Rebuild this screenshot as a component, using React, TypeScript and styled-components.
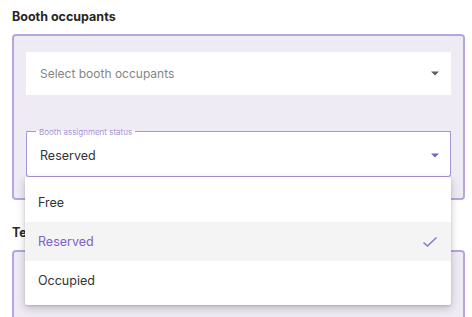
import styled, { createGlobalStyle } from "styled-components";

const GlobalStyle = createGlobalStyle`
  body {
    margin: 0;
    background: #ffffff;
    font-family: Inter, "Open Sans", Arial, sans-serif;
    color: #333333;
  }
`;

const statusOptions = ["Free", "Reserved", "Occupied"];
const selected = "Reserved";

const Caret = ({ color }: { color: string }) => (
  <svg width="8" height="5" viewBox="0 0 8 5">
    <path d="M0 0.5 L8 0.5 L4 4.5 Z" fill={color} />
  </svg>
);

const Check = () => (
  <svg width="16" height="12" viewBox="0 0 16 12">
    <path d="M1.5 6.5 L5.5 10 L14.5 1.5" fill="none" stroke="#8c73c9" strokeWidth="1.4" />
  </svg>
);

export default function App() {
  return (
    <>
      <GlobalStyle />
      <Page>
        <Section>
          <Heading>Booth occupants</Heading>
          <Panel>
            <FilledSelect>
              <Placeholder>Select booth occupants</Placeholder>
              <Caret color="#5f5f5f" />
            </FilledSelect>
            <FieldWrap>
              <OutlinedSelect>
                <Legend>
                  <span>Booth assignment status</span>
                </Legend>
                <Value>{selected}</Value>
                <Caret color="#7b5ec4" />
              </OutlinedSelect>
              <Menu>
                {statusOptions.map((opt) => (
                  <MenuItem key={opt} $active={opt === selected}>
                    {opt}
                    {opt === selected && <Check />}
                  </MenuItem>
                ))}
              </Menu>
            </FieldWrap>
          </Panel>
        </Section>
        <Section>
          <Heading>Team members</Heading>
          <Panel $tall />
        </Section>
      </Page>
    </>
  );
}

const Page = styled.div`
  display: flex;
  flex-direction: column;
  gap: 25px;
  padding: 9px 7px 0 12px;
  height: 317px;
  box-sizing: border-box;
  overflow: hidden;
`;

const Section = styled.section`
  display: flex;
  flex-direction: column;
  gap: 9px;
`;

const Heading = styled.h2`
  margin: 0;
  font-size: 12.5px;
  line-height: 16px;
  font-weight: 700;
  color: #262626;
`;

const Panel = styled.div<{ $tall?: boolean }>`
  display: flex;
  flex-direction: column;
  gap: 36px;
  padding: 16px 12px 21px;
  min-height: ${(p) => (p.$tall ? "120px" : "auto")};
  border: 2px solid #b7a6dc;
  border-radius: 4px;
  background: #efebf4;
`;

const FilledSelect = styled.div`
  display: flex;
  align-items: center;
  justify-content: space-between;
  height: 43px;
  padding: 0 12px 0 14px;
  background: #ffffff;
`;

const Placeholder = styled.span`
  font-size: 12px;
  color: #858585;
`;

const FieldWrap = styled.div`
  position: relative;
`;

const OutlinedSelect = styled.div`
  position: relative;
  display: flex;
  align-items: center;
  justify-content: space-between;
  height: 46px;
  box-sizing: border-box;
  padding: 4px 11px 0 13px;
  border: 1px solid #a893d3;
  border-top: none;
  border-radius: 3px;
  background: #ffffff;
`;

const Legend = styled.div`
  position: absolute;
  top: 0;
  left: -1px;
  right: -1px;
  display: flex;
  align-items: center;
  height: 1px;
  &::before {
    content: "";
    width: 10px;
    height: 1px;
    background: #a893d3;
    border-top-left-radius: 3px;
  }
  &::after {
    content: "";
    flex: 1;
    height: 1px;
    background: #a893d3;
  }
  span {
    padding: 0 3px;
    font-size: 8px;
    line-height: 10px;
    color: #a491d4;
    white-space: nowrap;
  }
`;

const Value = styled.span`
  font-size: 12.5px;
  color: #333333;
`;

const Menu = styled.ul`
  position: absolute;
  top: 100%;
  left: -1px;
  right: 0;
  z-index: 5;
  margin: 0;
  padding: 6px 0 5px;
  list-style: none;
  background: #ffffff;
  border-radius: 2px;
  box-shadow: 0 3px 8px rgba(0, 0, 0, 0.22), 0 1px 2px rgba(0, 0, 0, 0.12);
`;

const MenuItem = styled.li<{ $active?: boolean }>`
  display: flex;
  align-items: center;
  justify-content: space-between;
  height: 39px;
  padding: 0 13px 0 13px;
  font-size: 12.5px;
  color: ${(p) => (p.$active ? "#7e61c2" : "#333333")};
  background: ${(p) => (p.$active ? "#f4f4f4" : "transparent")};
`;
